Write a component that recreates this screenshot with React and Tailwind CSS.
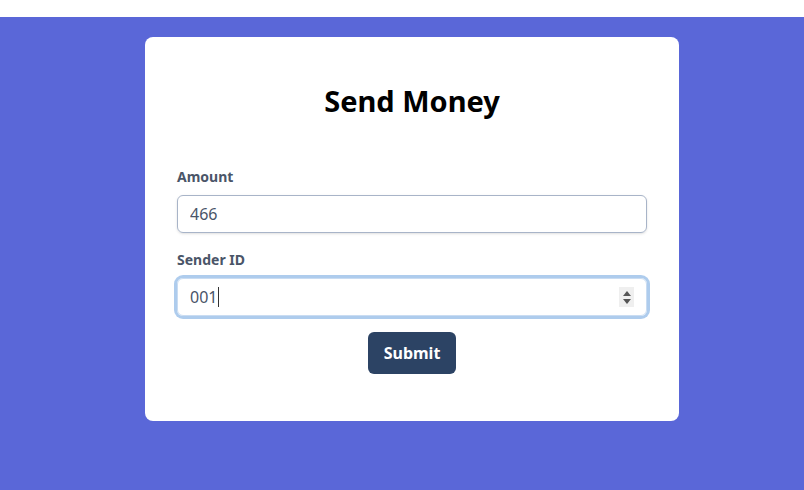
export default function App() {
  return (
    <div className="w-[804px] h-[490px] bg-white pt-[17px] font-['Noto_Sans',sans-serif]">
      <div className="h-[473px] bg-[#5a67d8] pt-[20px]">
        <div className="ml-[145px] w-[534px] bg-white rounded-lg px-8 pt-[44px] pb-[47px]">
          <h1 className="text-center text-[29px] leading-[40px] font-bold text-black mb-[46px]">Send Money</h1>
          <div className="mb-[17px]">
            <label className="block text-[14px] leading-[20px] font-bold text-[#4a5568] mb-2">Amount</label>
            <input
              readOnly
              value="466"
              className="block w-full h-[38px] rounded-md border border-[#a8b4c8] shadow-sm px-3 text-[16px] text-[#4a5568] outline-none"
            />
          </div>
          <div className="mb-4">
            <label className="block text-[14px] leading-[20px] font-bold text-[#4a5568] mb-2">Sender ID</label>
            <div className="relative flex items-center w-full h-[38px] rounded-md border border-[#c9dcf2] shadow-[0_0_0_3px_rgba(120,170,225,0.6)] px-3 text-[16px] text-[#4a5568]">
              <span>001</span>
              <span className="inline-block w-px h-[20px] bg-[#333] ml-px" />
              <span className="absolute right-[12px] top-[8px] w-[15px] h-[20px] bg-[#efefef] flex flex-col items-center justify-center gap-[3px]">
                <svg width="8" height="5" viewBox="0 0 8 5"><path d="M0 5 L4 0 L8 5Z" fill="#555" /></svg>
                <svg width="8" height="5" viewBox="0 0 8 5"><path d="M0 0 L4 5 L8 0Z" fill="#555" /></svg>
              </span>
            </div>
          </div>
          <div className="flex justify-center">
            <button className="h-[42px] w-[88px] rounded-md bg-[#2c4364] text-white font-bold text-[16px]">Submit</button>
          </div>
        </div>
      </div>
    </div>
  );
}
